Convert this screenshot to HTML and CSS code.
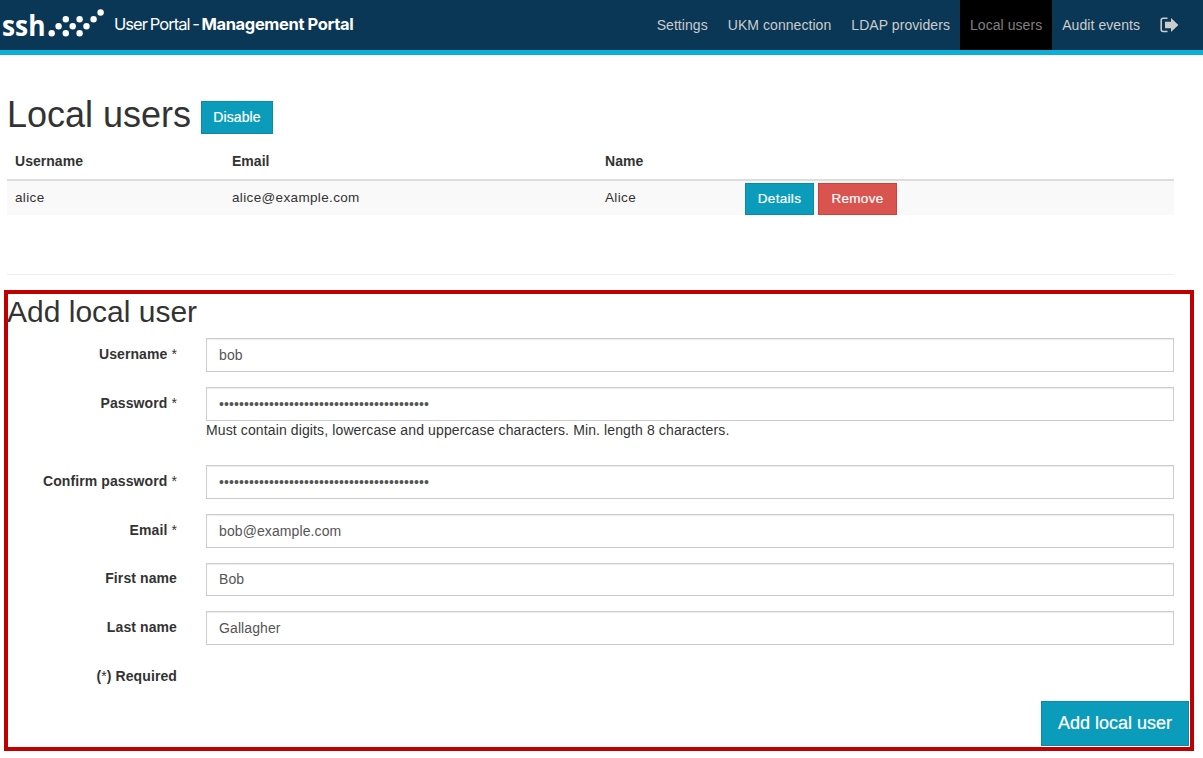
FILE: index.html
```html
<!DOCTYPE html>
<html lang="en">
<head>
  <meta charset="UTF-8">
  <meta name="viewport" content="width=device-width, initial-scale=1.0">
  <title>Management Portal</title>
  <link rel="stylesheet" href="styles.css">
</head>
<body>
  <header class="navbar">
    <a class="brand">
      <svg class="logo" width="108" height="44" viewBox="0 0 108 44">
        <text class="logo-text" x="2" y="36" textLength="43.5" lengthAdjust="spacingAndGlyphs">ssh</text>
        <g fill="#fff">
          <circle cx="51.7" cy="33.3" r="3.2"/>
          <circle cx="58.6" cy="26.2" r="3.2"/>
          <circle cx="65.8" cy="19.3" r="3.2"/>
          <circle cx="65.8" cy="33.3" r="3.2"/>
          <circle cx="72.7" cy="26.2" r="3.2"/>
          <circle cx="79.6" cy="19.3" r="3.2"/>
          <circle cx="79.6" cy="33.3" r="3.2"/>
          <circle cx="86.5" cy="26.2" r="3.2"/>
          <circle cx="93.6" cy="19.3" r="3.2"/>
          <circle cx="100.6" cy="12.5" r="3.2"/>
        </g>
      </svg>
      <span class="brand-light">User Portal -</span>
      <span class="brand-bold">Management Portal</span>
    </a>
    <nav class="nav">
      <a>Settings</a>
      <a>UKM connection</a>
      <a>LDAP providers</a>
      <a class="active">Local users</a>
      <a>Audit events</a>
      <a class="logout">
        <svg width="19" height="16" viewBox="0 0 19 16">
          <path d="M7.5 1.3H3.2Q1.2 1.3 1.2 3.3v9.2q0 2 2 2H7.5" fill="none" stroke="#ccc" stroke-width="1.6"/>
          <path d="M5 4.7h6V1l7.4 7L11 15v-3.7H5z" fill="#ccc"/>
        </svg>
      </a>
    </nav>
  </header>

  <main class="content">
    <div class="page-title">
      <h1>Local users</h1>
      <button class="btn btn-disable">Disable</button>
    </div>

    <table class="users">
      <thead>
        <tr>
          <th class="col-username">Username</th>
          <th class="col-email">Email</th>
          <th class="col-name">Name</th>
          <th></th>
        </tr>
      </thead>
      <tbody>
        <tr>
          <td>alice</td>
          <td>alice@example.com</td>
          <td>Alice</td>
          <td class="actions">
            <div class="action-buttons">
              <button class="btn btn-details">Details</button>
              <button class="btn btn-danger">Remove</button>
            </div>
          </td>
        </tr>
      </tbody>
    </table>
    <hr>
  </main>

  <section class="add-user">
    <h2>Add local user</h2>
    <form>
      <div class="form-row">
        <label for="username">Username <span>*</span></label>
        <input type="text" id="username" value="bob">
      </div>
      <div class="form-row form-row-help">
        <label for="password">Password <span>*</span></label>
        <div class="field">
          <input type="password" id="password" value="012345678901234567890123456789012345678901">
          <p class="help">Must contain digits, lowercase and uppercase characters. Min. length 8 characters.</p>
        </div>
      </div>
      <div class="form-row">
        <label for="confirm">Confirm password <span>*</span></label>
        <input type="password" id="confirm" value="012345678901234567890123456789012345678901">
      </div>
      <div class="form-row">
        <label for="email">Email <span>*</span></label>
        <input type="text" id="email" value="bob@example.com">
      </div>
      <div class="form-row form-row-short">
        <label for="firstname">First name</label>
        <input type="text" id="firstname" value="Bob">
      </div>
      <div class="form-row">
        <label for="lastname">Last name</label>
        <input type="text" id="lastname" value="Gallagher">
      </div>
      <div class="form-row form-row-required">
        <label>(<span>*</span>) Required</label>
      </div>
      <div class="form-actions">
        <button type="button" class="btn btn-submit">Add local user</button>
      </div>
    </form>
  </section>
</body>
</html>
```

FILE: styles.css
```css
* {
  box-sizing: border-box;
}

body {
  margin: 0;
  font-family: "Liberation Sans", Arial, sans-serif;
  font-size: 14px;
  line-height: 20px;
  color: #333;
  background: #fff;
}

/* Top bar */
.navbar {
  display: flex;
  justify-content: space-between;
  height: 55px;
  padding-right: 14px;
  background: #0a3756;
  border-bottom: 5px solid #0eafd7;
}

.brand {
  display: flex;
  color: #fff;
  font-family: Inter, sans-serif;
  font-size: 16.5px;
  line-height: 48px;
  white-space: nowrap;
}

.logo-text {
  font-family: "Open Sans", sans-serif;
  font-size: 29px;
  font-weight: 700;
  fill: #fff;
}

.brand-light {
  width: 87.5px;
  margin-left: 6px;
  letter-spacing: -0.95px;
  word-spacing: -1px;
}

.brand-bold {
  font-weight: 700;
  letter-spacing: -0.37px;
}

.nav {
  display: flex;
}

.nav a {
  padding: 15px 10px;
  color: #ccc;
  letter-spacing: 0.06px;
}

.nav .active {
  color: #808080;
  background: #000;
}

.nav .logout {
  padding: 17px 10px;
  line-height: 0;
}

/* Users list */
.content {
  padding: 40px 29px 0 7px;
}

.page-title {
  display: flex;
  height: 51px;
}

h1,
h2 {
  margin: 0;
  font-weight: 400;
}

h1 {
  width: 194px;
  font-size: 36px;
  line-height: 40px;
}

.btn {
  padding: 0 0 2px;
  color: #fff;
  font-family: inherit;
  font-size: 14px;
  background: #0b9bbb;
  border: 1px solid #0b89a6;
  -webkit-text-stroke: 0.2px #fff;
}

.btn-disable {
  width: 72px;
  height: 33px;
  margin-top: 6px;
  letter-spacing: 0.1px;
}

.users {
  width: 100%;
  border-collapse: separate;
  border-spacing: 0;
  table-layout: fixed;
}

.users th,
.users td {
  padding: 0 8px;
  text-align: left;
}

.users th {
  height: 35px;
  padding-bottom: 3px;
  border-bottom: 2px solid #ddd;
  letter-spacing: 0.03px;
}

.users td {
  height: 34px;
  font-size: 13.5px;
  background: #f9f9f9;
  letter-spacing: 0.35px;
}

.col-username {
  width: 217px;
}

.col-email {
  width: 373px;
}

.col-name {
  width: 140px;
}

.action-buttons {
  display: flex;
  gap: 4px;
  padding-top: 2px;
}

.action-buttons .btn {
  height: 32px;
  font-size: 13.5px;
  letter-spacing: 0.3px;
}

.btn-details {
  width: 69px;
}

.btn-danger {
  width: 79px;
  background: #d9534f;
  border-color: #d43f3a;
}

hr {
  margin: 59px 0 0;
  border: 0;
  border-top: 1px solid #eee;
}

/* Add user form */
.add-user {
  width: 1190px;
  height: 461px;
  margin: 15px 0 0 4px;
  border: 4px solid #c00000;
}

h2 {
  height: 44px;
  margin-left: -1px;
  padding-top: 1px;
  font-size: 30px;
  line-height: 33px;
}

.form-row {
  display: flex;
  height: 49px;
}

.form-row-help {
  height: 78px;
}

.form-row-short {
  height: 48px;
}

.form-row-required {
  height: 41px;
}

label {
  width: 169px;
  margin-right: 29px;
  padding-top: 6px;
  font-weight: 700;
  text-align: right;
  letter-spacing: 0.1px;
}

.form-row-short label {
  padding-top: 5px;
}

label span {
  font-weight: 400;
}

input {
  width: 968px;
  height: 34px;
  padding: 0 12px;
  color: #555;
  font-family: inherit;
  font-size: 14px;
  letter-spacing: 0.1px;
  border: 1px solid #ccc;
  box-shadow: inset 0 1px 1px rgba(0, 0, 0, 0.075);
}

.form-row-short input {
  height: 33px;
  padding-bottom: 1px;
}

.field {
  display: flex;
  flex-direction: column;
}

.help {
  margin: 0;
  line-height: 18px;
  letter-spacing: 0.12px;
}

.form-actions {
  display: flex;
  justify-content: flex-end;
  padding-right: 1px;
}

.btn-submit {
  width: 148px;
  height: 45px;
  padding: 0;
  font-size: 18px;
}
```
